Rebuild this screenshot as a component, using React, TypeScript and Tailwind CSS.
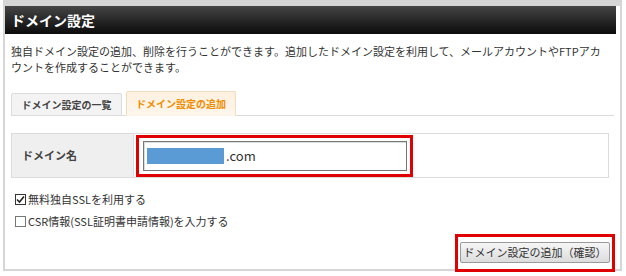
const jp = "font-['Noto_Sans_CJK_JP','Liberation_Sans',sans-serif]";

function CheckRow({ checked, label }: { checked: boolean; label: string }) {
  return (
    <label className="flex items-center h-[16px] text-[11px] text-[#333] leading-[16px]">
      <span
        className={`ml-[4px] mr-[2px] w-[11px] h-[11px] border flex items-center justify-center bg-white ${
          checked ? "border-[#333]" : "border-[#777]"
        }`}
      >
        {checked && (
          <svg width="9" height="9" viewBox="0 0 9 9">
            <path d="M1 4.5 L3.5 7 L8 1.5" fill="none" stroke="#222" strokeWidth="1.6" />
          </svg>
        )}
      </span>
      {label}
    </label>
  );
}

export default function App() {
  return (
    <div className={`w-[626px] h-[276px] bg-white ${jp}`}>
      <div className="ml-[3px] w-[619px] h-[271px] border-l-2 border-r-2 border-b-2 border-t-[6px] border-[#d6d6d6] pr-[4px]">
        {/* Header bar */}
        <div className="h-[28px] bg-gradient-to-b from-[#464646] to-[#0c0c0c] flex items-center pl-[6px]">
          <h1 className="text-white text-[14px] font-bold leading-none">ドメイン設定</h1>
        </div>

        <div className="pl-[6px] pr-[2px]">
          <p className="mt-[9px] text-[11px] leading-[16px] text-[#333]">
            独自ドメイン設定の追加、削除を行うことができます。追加したドメイン設定を利用して、メールアカウントやFTPアカ
            <br />
            ウントを作成することができます。
          </p>

          {/* Tabs */}
          <div className="mt-[16px] flex items-end gap-[4px] border-b border-[#dcdcdc]">
            <div className="w-[111px] h-[23px] -mb-px border border-[#dcdcdc] bg-[#f3f3f3] rounded-t-[2px] flex items-center justify-center text-[10px] font-bold text-[#444]">
              ドメイン設定の一覧
            </div>
            <div className="w-[110px] h-[25px] -mb-px border border-[#f1dcc0] border-b-[#fdf4e8] bg-gradient-to-b from-[#fdf0df] to-[#fdf6ec] rounded-t-[2px] flex items-center justify-center text-[10px] font-bold text-[#f08c00]">
              ドメイン設定の追加
            </div>
          </div>

          {/* Domain row */}
          <div className="mt-[17px] mr-[5px] h-[45px] flex border border-[#dcdcdc]">
            <div className="w-[122px] bg-[#efefef] border-r border-[#dcdcdc] flex items-center pl-[10px] text-[11px] font-bold text-[#444]">
              ドメイン名
            </div>
            <div className="flex items-center pl-[2px]">
              <div className="border-[3px] border-[#e00000] pl-[4px] pr-[3px] py-[3px]">
                <div className="w-[264px] h-[30px] border border-[#777] shadow-[inset_1px_1px_0_#ddd] bg-white flex items-center pl-[3px]">
                  <span className="w-[77px] h-[16px] bg-[#5b9bd5]" />
                  <span className="ml-[2px] text-[13px] text-[#333]">.com</span>
                </div>
              </div>
            </div>
          </div>

          {/* Options */}
          <div className="mt-[13px] flex flex-col gap-[6px]">
            <CheckRow checked label="無料独自SSLを利用する" />
            <CheckRow checked={false} label="CSR情報(SSL証明書申請情報)を入力する" />
          </div>

          <div className="mt-[5px] flex justify-end -mr-[1px]">
            <div className="border-[3px] border-[#e00000] px-[2px] pt-[1px] pb-[6px]">
              <button className="w-[150px] h-[21px] border border-[#9a9a9a] rounded-[2px] bg-gradient-to-b from-[#f6f6f6] to-[#dcdcdc] text-[11px] text-[#333] leading-none">
                ドメイン設定の追加（確認）
              </button>
            </div>
          </div>
        </div>
      </div>
    </div>
  );
}
